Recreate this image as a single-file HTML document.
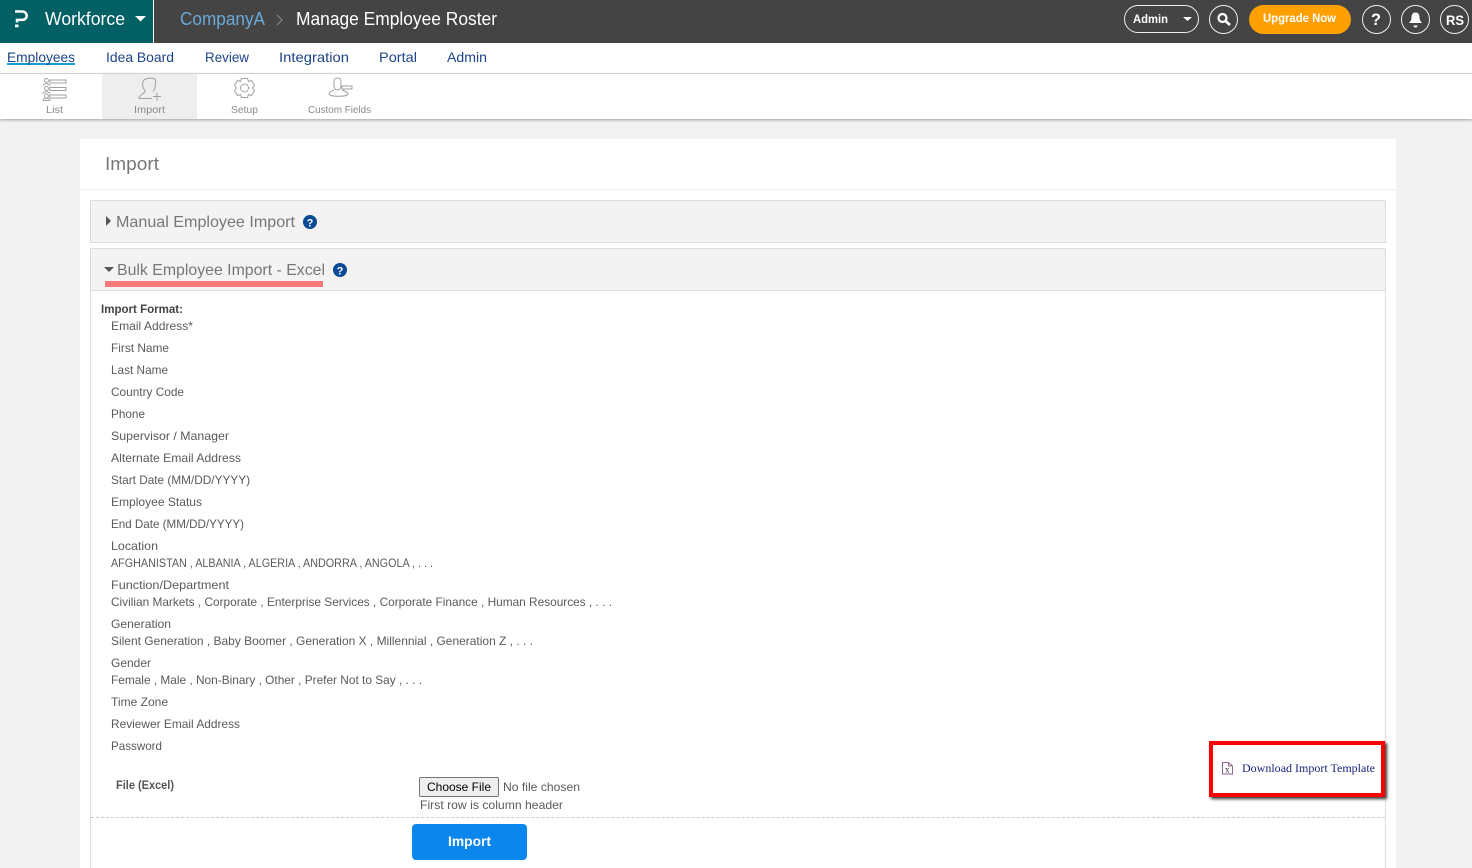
<!DOCTYPE html>
<html><head><meta charset="utf-8"><title>Manage Employee Roster</title>
<style>
html,body{margin:0;padding:0;width:1472px;height:868px;overflow:hidden;background:#f2f2f2;font-family:"Liberation Sans",sans-serif}
.a{position:absolute;box-sizing:border-box}
svg{position:absolute;left:0;top:0}
text{font-family:"Liberation Sans",sans-serif;font-size:12px;fill:#555}
.b{fill:#5a5a5a;font-size:12px}
.n{fill:#1c4587;font-size:14px}
.s{fill:#8a8a8a;font-size:10px}
</style></head><body>
<div class="a" style="left:0;top:0;width:1472px;height:43px;background:#444"></div>
<div class="a" style="left:0;top:0;width:153px;height:43px;background:#006064"></div>
<div class="a" style="left:153px;top:0;width:1px;height:43px;background:#fff"></div>
<div class="a" style="left:0;top:43px;width:1472px;height:31px;background:#fff;border-bottom:1px solid #ddd"></div>
<div class="a" style="left:0;top:74px;width:1472px;height:45px;background:#fff;box-shadow:0 1px 3px rgba(0,0,0,.35)"></div>
<div class="a" style="left:102px;top:74px;width:95px;height:45px;background:#eee"></div>
<div class="a" style="left:7px;top:63px;width:68px;height:2px;background:#1b9ad6"></div>

<div class="a" style="left:80px;top:139px;width:1316px;height:729px;background:#fff"></div>
<div class="a" style="left:80px;top:189px;width:1316px;height:1px;background:#eee"></div>
<div class="a" style="left:90px;top:200px;width:1296px;height:43px;background:#f3f3f3;border:1px solid #ddd"></div>
<div class="a" style="left:90px;top:248px;width:1296px;height:43px;background:#f3f3f3;border:1px solid #ddd"></div>
<div class="a" style="left:90px;top:291px;width:1296px;height:577px;border-left:1px solid #ddd;border-right:1px solid #ddd"></div>
<div class="a" style="left:105px;top:281px;width:218px;height:6px;background:#fb7878"></div>
<div class="a" style="left:91px;top:817px;width:1294px;border-top:1px dashed #ccc"></div>

<div class="a" style="left:1124px;top:5px;width:75px;height:28px;border:1px solid #eee;border-radius:14px"></div>
<div class="a" style="left:1209px;top:5px;width:29px;height:29px;border:1px solid #eee;border-radius:50%"></div>
<div class="a" style="left:1249px;top:5px;width:102px;height:29px;background:#ff9f00;border-radius:15px"></div>
<div class="a" style="left:1362px;top:5px;width:29px;height:29px;border:1px solid #eee;border-radius:50%"></div>
<div class="a" style="left:1401px;top:5px;width:29px;height:29px;border:1px solid #eee;border-radius:50%"></div>
<div class="a" style="left:1440px;top:5px;width:29px;height:29px;border:1px solid #eee;border-radius:50%"></div>

<div class="a" style="left:1209px;top:741px;width:176px;height:56px;background:#fff;border:4px solid #f00;box-shadow:2px 2px 3px #333"></div>
<button class="a" style="left:419px;top:777px;width:80px;height:20px;background:#efefef;border:1px solid #767676;border-radius:2px;font:12px 'Liberation Sans',sans-serif;color:#000;padding:0">Choose File</button>
<div class="a" style="left:412px;top:824px;width:115px;height:36px;background:#0b86ec;border-radius:4px"></div>

<svg width="1472" height="868" viewBox="0 0 1472 868">
<!-- logo -->
<path d="M15 11.500h7.500a4.200 4.200 0 0 1 0 8.400h-5.500v2.600" fill="none" stroke="#fff" stroke-width="2.500"/>
<rect x="15" y="24.500" width="3.500" height="2.800" fill="#fff"/>
<path d="M135 16h11l-5.500 5.500z" fill="#fff"/>
<text x="45" y="25" textLength="80" lengthAdjust="spacingAndGlyphs" style="font-size:18px;fill:#fff">Workforce</text>
<text x="180" y="25" textLength="85" lengthAdjust="spacingAndGlyphs" style="font-size:18px;fill:#6aa9d8">CompanyA</text>
<path d="M277 15l5 5-5 5" fill="none" stroke="#888" stroke-width="1.200"/>
<text x="296" y="25" textLength="201" lengthAdjust="spacingAndGlyphs" style="font-size:18px;fill:#fff">Manage Employee Roster</text>

<text x="1133" y="23" textLength="35" lengthAdjust="spacingAndGlyphs" style="font-size:12px;font-weight:bold;fill:#fff">Admin</text>
<path d="M1183 17h9l-4.500 4z" fill="#fff"/>
<circle cx="1222.500" cy="18" r="4" fill="none" stroke="#fff" stroke-width="2.200"/>
<path d="M1225.500 21l4.500 4" stroke="#fff" stroke-width="2.800"/>
<text x="1263" y="22" textLength="73" lengthAdjust="spacingAndGlyphs" style="font-size:12px;font-weight:bold;fill:#fff">Upgrade Now</text>
<text x="1371" y="25" textLength="10" lengthAdjust="spacingAndGlyphs" style="font-size:17px;font-weight:bold;fill:#fff">?</text>
<path d="M1415.500 12.500c-3 0-4 2.500-4 5 0 3-1.500 4-2.500 5.500h13c-1-1.500-2.500-2.500-2.500-5.500 0-2.500-1-5-4-5z" fill="#fff"/>
<path d="M1413.500 25.500h4a2 2 0 0 1-4 0z" fill="#fff"/>
<text x="1446" y="25" textLength="18" lengthAdjust="spacingAndGlyphs" style="font-size:14px;font-weight:bold;fill:#fff">RS</text>

<!-- nav -->
<text class="n" x="7" y="62" textLength="68" lengthAdjust="spacingAndGlyphs">Employees</text>
<text class="n" x="106" y="62" textLength="68" lengthAdjust="spacingAndGlyphs">Idea Board</text>
<text class="n" x="205" y="62" textLength="44" lengthAdjust="spacingAndGlyphs">Review</text>
<text class="n" x="279" y="62" textLength="70" lengthAdjust="spacingAndGlyphs">Integration</text>
<text class="n" x="379" y="62" textLength="38" lengthAdjust="spacingAndGlyphs">Portal</text>
<text class="n" x="447" y="62" textLength="40" lengthAdjust="spacingAndGlyphs">Admin</text>

<!-- sub icons -->
<g fill="none" stroke="#a0a0a0" stroke-width="1">
<circle cx="46.500" cy="80.500" r="2"/><path d="M43 86c0-3 7-3 7 0"/><rect x="50" y="80" width="16" height="3"/>
<circle cx="46.500" cy="88.500" r="2"/><path d="M43 94c0-3 7-3 7 0"/><rect x="50" y="87.500" width="16" height="3"/>
<circle cx="46.500" cy="96" r="2"/><path d="M43 100.500c0-3 7-3 7 0h-7"/><rect x="50" y="95" width="16" height="3"/>
<path d="M139 98.500c0-4 6-4 6-8-2-2-3-5-2-9 1-3 7-4 11-3 2 1 2 5 1 8 0 3-1 4-2 5M139 98.500h13"/>
<path d="M153 96.500h8M157 92.500v8"/>
<circle cx="244.500" cy="88" r="4"/>
<path d="M241.500 78.500h6l1 3 3-1 3 5-2 2.500 2 2.500-3 5-3-1-1 3h-6l-1-3-3 1-3-5 2-2.500-2-2.500 3-5 3 1z"/>
<path d="M334 81c0-4 7-4 7 0v4c0 3-1 5-3.500 5s-3.500-2-3.500-5zM334 90c-3 1-5 2-5 4 0 3 19 3 19 0 0-2-3-3-6-4"/>
<rect x="342" y="86" width="10" height="3"/>
</g>
<text class="s" x="46" y="113" textLength="17" lengthAdjust="spacingAndGlyphs">List</text>
<text class="s" x="134" y="113" textLength="31" lengthAdjust="spacingAndGlyphs">Import</text>
<text class="s" x="231" y="113" textLength="27" lengthAdjust="spacingAndGlyphs">Setup</text>
<text class="s" x="308" y="113" textLength="63" lengthAdjust="spacingAndGlyphs">Custom Fields</text>

<text x="105" y="170" textLength="54" lengthAdjust="spacingAndGlyphs" style="font-size:18px;fill:#777">Import</text>
<path d="M106 216l5 5-5 5z" fill="#555"/>
<text x="116" y="227" textLength="179" lengthAdjust="spacingAndGlyphs" style="font-size:16px;fill:#777">Manual Employee Import</text>
<circle cx="310" cy="222" r="7" fill="#0a4a97"/>
<text x="310" y="226.500" text-anchor="middle" style="font-size:11px;font-weight:bold;fill:#fff">?</text>
<path d="M104 267h10l-5 5z" fill="#555"/>
<text x="117" y="275" textLength="208" lengthAdjust="spacingAndGlyphs" style="font-size:16px;fill:#777">Bulk Employee Import - Excel</text>
<circle cx="340" cy="270" r="7" fill="#0a4a97"/>
<text x="340" y="274.500" text-anchor="middle" style="font-size:11px;font-weight:bold;fill:#fff">?</text>

<text x="101" y="313" textLength="82" lengthAdjust="spacingAndGlyphs" style="font-weight:bold;fill:#444">Import Format:</text>
<text class="b" x="111" y="330" textLength="82" lengthAdjust="spacingAndGlyphs">Email Address*</text>
<text class="b" x="111" y="352" textLength="58" lengthAdjust="spacingAndGlyphs">First Name</text>
<text class="b" x="111" y="374" textLength="57" lengthAdjust="spacingAndGlyphs">Last Name</text>
<text class="b" x="111" y="396" textLength="73" lengthAdjust="spacingAndGlyphs">Country Code</text>
<text class="b" x="111" y="418" textLength="34" lengthAdjust="spacingAndGlyphs">Phone</text>
<text class="b" x="111" y="440" textLength="118" lengthAdjust="spacingAndGlyphs">Supervisor / Manager</text>
<text class="b" x="111" y="462" textLength="130" lengthAdjust="spacingAndGlyphs">Alternate Email Address</text>
<text class="b" x="111" y="484" textLength="139" lengthAdjust="spacingAndGlyphs">Start Date (MM/DD/YYYY)</text>
<text class="b" x="111" y="506" textLength="91" lengthAdjust="spacingAndGlyphs">Employee Status</text>
<text class="b" x="111" y="528" textLength="133" lengthAdjust="spacingAndGlyphs">End Date (MM/DD/YYYY)</text>
<text class="b" x="111" y="550" textLength="47" lengthAdjust="spacingAndGlyphs">Location</text>
<text class="b" x="111" y="567" textLength="322" lengthAdjust="spacingAndGlyphs">AFGHANISTAN , ALBANIA , ALGERIA , ANDORRA , ANGOLA , . . .</text>
<text class="b" x="111" y="589" textLength="118" lengthAdjust="spacingAndGlyphs">Function/Department</text>
<text class="b" x="111" y="606" textLength="501" lengthAdjust="spacingAndGlyphs">Civilian Markets , Corporate , Enterprise Services , Corporate Finance , Human Resources , . . .</text>
<text class="b" x="111" y="628" textLength="60" lengthAdjust="spacingAndGlyphs">Generation</text>
<text class="b" x="111" y="645" textLength="422" lengthAdjust="spacingAndGlyphs">Silent Generation , Baby Boomer , Generation X , Millennial , Generation Z , . . .</text>
<text class="b" x="111" y="667" textLength="40" lengthAdjust="spacingAndGlyphs">Gender</text>
<text class="b" x="111" y="684" textLength="311" lengthAdjust="spacingAndGlyphs">Female , Male , Non-Binary , Other , Prefer Not to Say , . . .</text>
<text class="b" x="111" y="706" textLength="57" lengthAdjust="spacingAndGlyphs">Time Zone</text>
<text class="b" x="111" y="728" textLength="129" lengthAdjust="spacingAndGlyphs">Reviewer Email Address</text>
<text class="b" x="111" y="750" textLength="51" lengthAdjust="spacingAndGlyphs">Password</text>

<text x="116" y="789" textLength="58" lengthAdjust="spacingAndGlyphs" style="font-weight:bold;fill:#555">File (Excel)</text>
<text class="b" x="503" y="791" textLength="77" lengthAdjust="spacingAndGlyphs">No file chosen</text>
<text class="b" x="420" y="809" textLength="143" lengthAdjust="spacingAndGlyphs">First row is column header</text>
<text x="448" y="846" textLength="43" lengthAdjust="spacingAndGlyphs" style="font-size:14px;font-weight:bold;fill:#fff">Import</text>

<path d="M1222.500 762.500h6l4 3.500v8h-10zM1228.500 762.500v3.500h4" fill="#fff" stroke="#8a6a8a" stroke-width="1"/>
<text x="1225" y="772.500" style="font-family:'Liberation Serif',serif;font-size:9px;fill:#333">x</text>
<text x="1242" y="772" textLength="133" lengthAdjust="spacingAndGlyphs" style="font-family:'Liberation Serif',serif;font-size:12px;fill:#1a237e">Download Import Template</text>
</svg>
</body></html>
